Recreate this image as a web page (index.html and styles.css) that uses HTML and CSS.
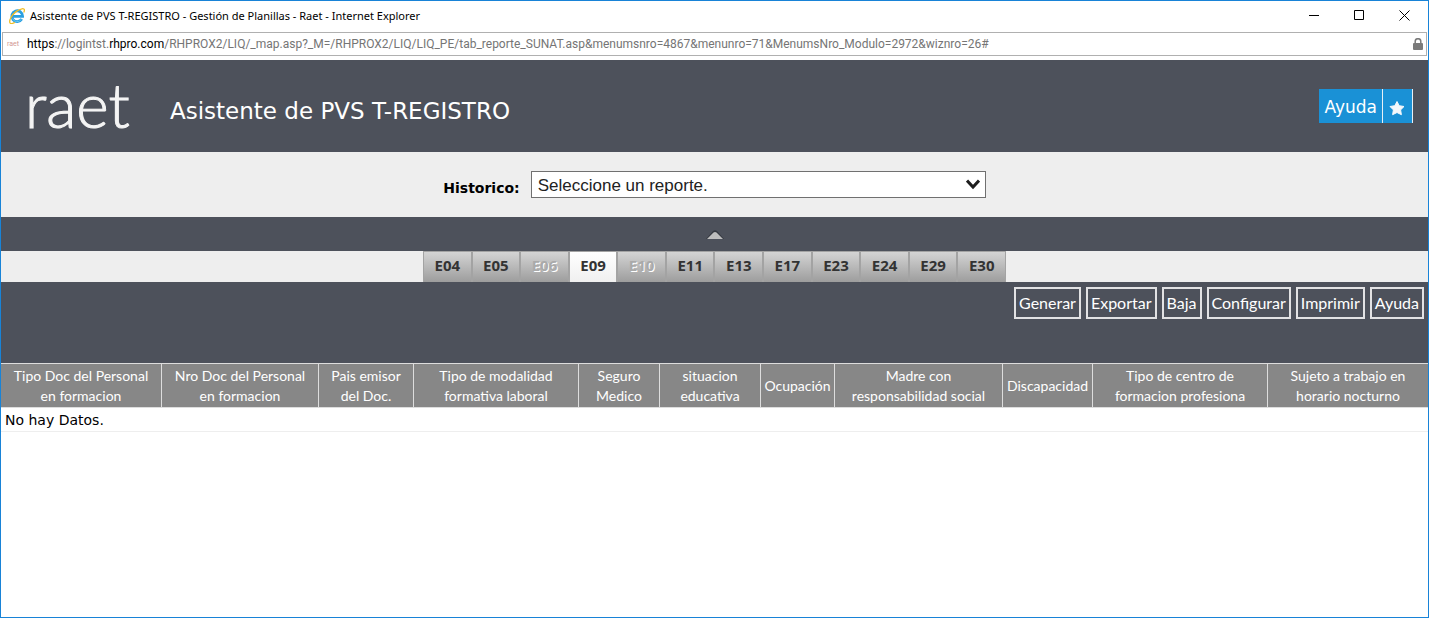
FILE: index.html
```html
<!DOCTYPE html>
<html lang="es">
<head>
<meta charset="utf-8">
<title>Asistente de PVS T-REGISTRO - Gestión de Planillas - Raet</title>
<link rel="stylesheet" href="styles.css">
</head>
<body>
<div class="window">
  <div class="titlebar">
    <svg class="ie-icon" viewBox="0 0 16 16" aria-hidden="true">
      <path d="M12.800 11a5.400 5.400 0 1 1 .8-2.700H4.200" fill="none" stroke="#2a9fe0" stroke-width="2.800"/>
      <path d="M12.300 11.200a4.700 4.700 0 0 1-8.600-.7" fill="none" stroke="#6cc7f2" stroke-width="1"/>
      <path d="M1.200 15.200C-.6 12.600 3 6.600 7.400 3.400 11.600.4 15.600-.2 15.400 2.200c0 .7-.3 1.500-.7 2.300M1.200 15.200c.8.800 2.700.3 4.600-.8" fill="none" stroke="#f0bd24" stroke-width="1.300"/>
    </svg>
    <span class="titlebar-text">Asistente de PVS T-REGISTRO - Gestión de Planillas - Raet - Internet Explorer</span>
    <div class="window-controls">
      <button type="button" class="window-button" aria-label="Minimizar"><svg viewBox="0 0 11 11"><path d="M0 5.500h10"/></svg></button>
      <button type="button" class="window-button" aria-label="Maximizar"><svg viewBox="0 0 11 11"><path d="M.5.5h9v9h-9z"/></svg></button>
      <button type="button" class="window-button" aria-label="Cerrar"><svg viewBox="0 0 11 11"><path d="M.5.5l10 10M10.500.5l-10 10"/></svg></button>
    </div>
  </div>
  <div class="address">
    <span class="favicon" aria-hidden="true">raet</span>
    <span class="url"><b>https</b>://logintst.<b>rhpro.com</b>/RHPROX2/LIQ/_map.asp?_M=/RHPROX2/LIQ/LIQ_PE/tab_reporte_SUNAT.asp&amp;menumsnro=4867&amp;menunro=71&amp;MenumsNro_Modulo=2972&amp;wiznro=26#</span>
    <svg class="lock" viewBox="0 0 10 12" aria-hidden="true"><path d="M2.200 6V3.500a2.800 2.800 0 0 1 5.600 0V6" fill="none" stroke="#7a7a7a" stroke-width="1.500"/><rect y="5" width="10" height="7" rx="1" fill="#7a7a7a"/></svg>
  </div>
  <header class="header">
    <div class="logo">raet</div>
    <h1 class="heading">Asistente de PVS T-REGISTRO</h1>
    <div class="help">
      <a class="help-link" href="#">Ayuda</a>
      <a class="help-link help-star" href="#" aria-label="Favoritos"><svg viewBox="0 0 16 16"><path d="M8 1.500l2.200 4.200 4.800.8-3.400 3.400.8 4.800L8 12.500l-4.400 2.200.8-4.800L1 6.500l4.800-.8z" fill="#f4f8fc" stroke="#f4f8fc" stroke-linejoin="round"/></svg></a>
    </div>
  </header>
  <div class="filter">
    <label class="filter-label" for="historico">Historico:</label>
    <div class="select-box">
      <select id="historico" class="select"><option>Seleccione un reporte.</option></select>
      <svg class="chevron" viewBox="0 0 14 11" aria-hidden="true"><path d="M1 1.500l6 6.500 6-6.500" fill="none" stroke="#1e1e1e" stroke-width="3"/></svg>
    </div>
  </div>
  <div class="collapse">
    <button type="button" class="collapse-button" aria-label="Ocultar"><svg viewBox="0 0 18 10"><path d="M0 9L7 1q2-1.500 4 0l7 8z" fill="#353940"/><path d="M1 9l6.500-6.500q1.500-1 3 0L17 9z" fill="#bdbdbd"/></svg></button>
  </div>
  <nav class="tabs-row">
    <div class="tabs">
      <button type="button" class="tab">E04</button>
      <button type="button" class="tab">E05</button>
      <button type="button" class="tab" disabled>E06</button>
      <button type="button" class="tab tab-active">E09</button>
      <button type="button" class="tab" disabled>E10</button>
      <button type="button" class="tab">E11</button>
      <button type="button" class="tab">E13</button>
      <button type="button" class="tab">E17</button>
      <button type="button" class="tab">E23</button>
      <button type="button" class="tab">E24</button>
      <button type="button" class="tab">E29</button>
      <button type="button" class="tab">E30</button>
    </div>
  </nav>
  <div class="toolbar">
    <button type="button" class="action">Generar</button>
    <button type="button" class="action">Exportar</button>
    <button type="button" class="action">Baja</button>
    <button type="button" class="action">Configurar</button>
    <button type="button" class="action">Imprimir</button>
    <button type="button" class="action">Ayuda</button>
  </div>
  <table class="grid">
    <colgroup>
      <col class="col-tipo"><col class="col-nro"><col class="col-pais"><col class="col-modalidad"><col class="col-seguro"><col class="col-situacion"><col class="col-ocupacion"><col class="col-madre"><col class="col-discapacidad"><col class="col-centro"><col class="col-nocturno">
    </colgroup>
    <thead>
      <tr>
        <th>Tipo Doc del Personal<br>en formacion</th>
        <th>Nro Doc del Personal<br>en formacion</th>
        <th>Pais emisor<br>del Doc.</th>
        <th>Tipo de modalidad<br>formativa laboral</th>
        <th>Seguro<br>Medico</th>
        <th>situacion<br>educativa</th>
        <th>Ocupación</th>
        <th>Madre con<br>responsabilidad social</th>
        <th>Discapacidad</th>
        <th>Tipo de centro de<br>formacion profesiona</th>
        <th>Sujeto a trabajo en<br>horario nocturno</th>
      </tr>
    </thead>
    <tbody>
      <tr><td colspan="11">No hay Datos.</td></tr>
    </tbody>
  </table>
</div>
</body>
</html>
```
FILE: styles.css
```css
* { box-sizing: border-box; }
body { margin: 0; font-family: "DejaVu Sans", sans-serif; background: #fff; }
button { border: 0; background: none; padding: 0; font: inherit; color: inherit; }
a { text-decoration: none; color: inherit; }
svg { display: block; }

.window { min-height: 100vh; border: 1px solid #1883d7; }

.titlebar { display: flex; align-items: center; height: 31px; padding: 0 11px 2px 8px; font: 11px "Noto Sans", sans-serif; color: #000; }
.ie-icon { width: 16px; height: 16px; margin-right: 5px; }
.window-controls { display: flex; gap: 34px; margin-left: auto; padding-right: 7px; }
.window-button { width: 11px; height: 11px; }
.window-button svg { width: 11px; height: 11px; fill: none; stroke: #000; stroke-width: 1; }

.address { display: flex; align-items: center; height: 24px; margin: 0 1px 4px; border: 1px solid #b0b0b0; padding: 0 3px 0 4px; font: 12px Roboto, sans-serif; color: #757575; }
.favicon { width: 20px; font-size: 7px; color: #d29a93; }
.url b { font-weight: 400; color: #000; }
.lock { width: 10px; height: 12px; margin-left: auto; }

.header { display: flex; align-items: center; height: 92px; padding: 0 15px 0 24px; background: #4d515b; color: #fff; }
.logo { width: 145px; padding-bottom: 4px; font: 300 62px/64px Lato, sans-serif; -webkit-text-stroke: 1px #f4f4f4; color: #f4f4f4; }
.heading { margin: 10px 0 0; font-size: 23px; font-weight: 400; line-height: 28px; }
.help { display: flex; margin-left: auto; }
.help-link { display: flex; align-items: center; height: 34px; padding: 2px 5px 0; border-right: 1px solid #e8f0f6; background: #1a91d6; font-size: 17px; }
.help-star { padding: 4px 7px 0 6px; }
.help-star svg { width: 16px; height: 16px; }

.filter { display: flex; justify-content: center; align-items: center; gap: 11px; height: 65px; background: #eee; }
.filter-label { padding-top: 6px; font-size: 14px; font-weight: 700; color: #000; }
.select-box { position: relative; width: 455px; max-width: 60%; }
.select { display: block; appearance: none; width: 100%; height: 27px; border: 1px solid #707070; border-radius: 0; padding: 2px 24px 0 6px; background: #fff; font: 17px "Liberation Sans", Arial, sans-serif; color: #222; }
.chevron { position: absolute; right: 6px; top: 8px; width: 14px; height: 11px; pointer-events: none; }

.collapse { display: flex; justify-content: center; height: 34px; padding-top: 13px; background: #4d515b; }
.collapse-button { width: 18px; height: 10px; }

.tabs-row { display: flex; justify-content: center; background: #eee; }
.tabs { display: grid; grid-template-columns: repeat(12, 1fr); width: 583px; }
.tab { height: 31px; border: solid #a3a3a3; border-width: 1px 1px 0 1px; padding-bottom: 4px; background: linear-gradient(#d4d4d4, #9d9d9d); font: 700 15px "Open Sans", sans-serif; color: #333; }
.tab:disabled { color: #aaa; text-shadow: 1px 1px 0 #fff; }
.tab-active { background: linear-gradient(#fff, #f0f0f0); }

.toolbar { display: flex; justify-content: flex-end; align-items: flex-start; gap: 5px; height: 81px; padding: 5px 4px 0; background: #4d515b; color: #fff; }
.action { height: 32px; border: 2px solid #e2e2e4; padding: 0 3px 2px; font: 16px Lato, sans-serif; }

.grid { width: 100%; table-layout: fixed; border-collapse: separate; border-spacing: 0; }
.grid th { height: 45px; padding: 0; border: solid #ddd; border-width: 1px 1px 1px 0; background: #878787; color: #fff; font: 14px/20px Lato, sans-serif; }
.grid th:last-child { border-right: 0; }
.grid td { height: 24px; padding: 0 4px; border-bottom: 1px solid #eee; font-size: 14px; color: #000; }
.col-tipo { width: 161px; }
.col-nro { width: 157px; }
.col-pais { width: 95px; }
.col-modalidad { width: 165px; }
.col-seguro { width: 81px; }
.col-situacion { width: 101px; }
.col-ocupacion { width: 74px; }
.col-madre { width: 168px; }
.col-discapacidad { width: 90px; }
.col-centro { width: 175px; }
.col-nocturno { width: 160px; }
```
